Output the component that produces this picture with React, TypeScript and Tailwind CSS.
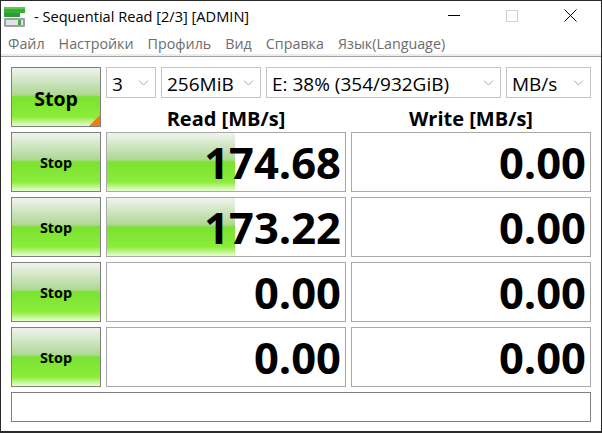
import React from "react";

const font = "font-['Open_Sans','Noto_Sans',sans-serif]";

const rows = [
  { read: "174.68", bar: 128, write: "0.00" },
  { read: "173.22", bar: 128, write: "0.00" },
  { read: "0.00", bar: 0, write: "0.00" },
  { read: "0.00", bar: 0, write: "0.00" },
];

const menu = ["Файл", "Настройки", "Профиль", "Вид", "Справка", "Язык(Language)"];

const green =
  "bg-[linear-gradient(to_bottom,#f0f3ee_0%,#aed894_46%,#7ae230_50%,#8cec3a_84%,#e8fdd0_100%)]";

function AppIcon() {
  return (
    <svg width="21" height="20" viewBox="0 0 21 20" className="shrink-0">
      <rect x="0" y="0" width="21" height="6" fill="#38b038" />
      <rect x="0" y="0" width="21" height="2" fill="#5ccc4c" />
      <rect x="0" y="6" width="16" height="4" fill="#2c9c34" />
      <rect x="0" y="11" width="21" height="9" rx="1" fill="#9ca2a4" />
      <rect x="2" y="13" width="17" height="5" fill="#dfe3e3" />
      <rect x="14" y="13" width="3" height="5" fill="#48a848" />
    </svg>
  );
}

function Chevron() {
  return (
    <svg width="11" height="6" viewBox="0 0 11 6" className="shrink-0">
      <path d="M1 0.5 L5.5 5 L10 0.5" fill="none" stroke="#a6a6a6" strokeWidth="1" />
    </svg>
  );
}

function Select({ value, width }: { value: string; width: string }) {
  return (
    <div className={`${width} h-[31px] flex items-center justify-between border border-[#c4c4c4] pl-[5px] pr-[6px] text-[19px] text-black`}>
      <span className="whitespace-nowrap pt-[3px]">{value}</span>
      <Chevron />
    </div>
  );
}

function StopButton({ big }: { big?: boolean }) {
  return (
    <button className={`relative h-[60px] w-[90px] flex items-center justify-center border border-[#7f7f7f] ${green} font-bold text-black ${big ? "text-[19.5px] pt-[3px]" : "text-[14.4px] pt-[1px]"}`}>
      Stop
      {big && (
        <span className="absolute bottom-0 right-0 w-0 h-0 border-l-[11px] border-l-transparent border-b-[11px] border-b-[#f97a10]" />
      )}
    </button>
  );
}

function Value({ text, bar }: { text: string; bar?: number }) {
  return (
    <div className="relative h-[60px] w-[240px] border border-[#a9a9a9] flex items-center justify-end pr-[4px] pt-[1px] bg-white">
      {!!bar && <div className={`absolute left-0 top-0 bottom-0 ${green}`} style={{ width: bar }} />}
      <span className="relative text-[43.5px] leading-none font-bold text-black">{text}</span>
    </div>
  );
}

export default function App() {
  return (
    <div className={`w-[602px] h-[433px] flex flex-col bg-white overflow-hidden border-t border-l border-r border-b-2 border-[#2a2a2a] ${font}`}>
      <div className="h-[29px] flex items-center shrink-0">
        <div className="ml-[3px] mr-[9px] mt-[2px]">
          <AppIcon />
        </div>
        <span className="text-[14.6px] text-black whitespace-nowrap pt-[2px]">- Sequential Read [2/3] [ADMIN]</span>
        <div className="ml-auto flex items-center mr-[2px]">
          <div className="w-[58px] flex justify-center">
            <div className="w-[12px] h-px bg-black" />
          </div>
          <div className="w-[58px] flex justify-center">
            <div className="w-[12px] h-[12px] border border-[#cfcfcf]" />
          </div>
          <div className="w-[58px] flex justify-center">
            <svg width="13" height="13" viewBox="0 0 13 13">
              <path d="M0.5 0.5 L12.5 12.5 M12.5 0.5 L0.5 12.5" stroke="#000" strokeWidth="1" fill="none" />
            </svg>
          </div>
        </div>
      </div>
      <div className="h-[26px] flex items-center gap-[14px] pl-[7px] pt-[4px] text-[14.3px] text-[#6d6d6d] border-b-2 border-[#ececec] shrink-0">
        {menu.map((m) => (
          <span key={m} className="whitespace-nowrap">{m}</span>
        ))}
      </div>
      <div className="flex-1 border-t border-[#a0a0a0] pt-[10px] pl-[10px]">
        <div className="grid grid-cols-[90px_240px_240px] gap-[5px]">
          <StopButton big />
          <div className="col-span-2 h-[60px] flex flex-col">
            <div className="flex gap-[5px]">
              <Select value="3" width="w-[50px]" />
              <Select value="256MiB" width="w-[100px]" />
              <Select value="E: 38% (354/932GiB)" width="w-[235px]" />
              <Select value="MB/s" width="w-[85px]" />
            </div>
            <div className="flex-1 grid grid-cols-2 gap-[5px] text-[20px] font-bold text-black text-center">
              <div className="leading-[42px]">Read [MB/s]</div>
              <div className="leading-[42px]">Write [MB/s]</div>
            </div>
          </div>
          {rows.map((r, i) => (
            <React.Fragment key={i}>
              <StopButton />
              <Value text={r.read} bar={r.bar} />
              <Value text={r.write} />
            </React.Fragment>
          ))}
          <div className="col-span-3 h-[30px] border border-[#7f7f7f]" />
        </div>
      </div>
    </div>
  );
}
